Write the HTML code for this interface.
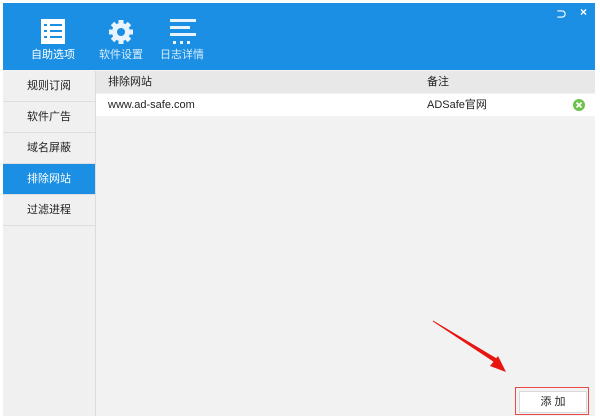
<!DOCTYPE html>
<html><head><meta charset="utf-8"><style>
body{margin:0;width:600px;height:419px;background:#fff;position:relative;overflow:hidden;font-family:"Liberation Sans","Noto Sans CJK SC",sans-serif;}
.win{position:absolute;left:3px;top:3px;width:592px;height:413px;background:#f2f2f2;}
.top{position:absolute;left:0;top:0;width:592px;height:67px;background:#1a8fe3;}
.tab{position:absolute;top:0;width:60px;height:67px;color:#fff;font-size:11px;text-align:center;}
.tab span{position:absolute;left:0;right:0;top:43px;}
.side{position:absolute;left:0;top:68px;width:92px;height:345px;background:#f0f0f0;border-right:1px solid #dcdcdc;}
.it{height:30px;line-height:30px;border-bottom:1px solid #dedede;font-size:11px;color:#222;text-align:center;}
.it.on{background:#1a8fe3;color:#fff;}
.hd{position:absolute;left:93px;top:68px;width:499px;height:22px;background:#e8e8e8;font-size:11px;line-height:22px;color:#222;}
.row{position:absolute;left:93px;top:91px;width:499px;height:22px;background:#fff;font-size:11px;line-height:22px;color:#222;}
</style></head><body>
<div class="win">
<div class="top">
 <div class="tab" style="left:20px">
  <svg width="60" height="44" viewBox="0 0 60 44"><rect x="18" y="16" width="24" height="25" fill="#fff"/><g stroke="#1a8fe3" stroke-width="2"><line x1="27" y1="22" x2="39" y2="22"/><line x1="27" y1="28" x2="39" y2="28"/><line x1="27" y1="34" x2="39" y2="34"/><line x1="21" y1="22" x2="24" y2="22"/><line x1="21" y1="28" x2="24" y2="28"/><line x1="21" y1="34" x2="24" y2="34"/></g></svg>
  <span>自助选项</span></div>
 <div class="tab" style="left:88px;color:#d8ecfb">
  <svg width="60" height="44" viewBox="0 0 60 44"><g fill="#e8f3fc"><circle cx="30" cy="29" r="9"/><g stroke="#e8f3fc" stroke-width="5"><line x1="30" y1="17" x2="30" y2="41"/><line x1="18" y1="29" x2="42" y2="29"/><line x1="21.5" y1="20.5" x2="38.5" y2="37.5"/><line x1="38.5" y1="20.5" x2="21.5" y2="37.5"/></g></g><circle cx="30" cy="29" r="4" fill="#1a8fe3"/></svg>
  <span>软件设置</span></div>
 <div class="tab" style="left:149px;color:#d8ecfb">
  <svg width="60" height="44" viewBox="0 0 60 44"><g fill="#e8f3fc"><rect x="18" y="16" width="26" height="3"/><rect x="18" y="23" width="20" height="3"/><rect x="18" y="30" width="26" height="3"/><rect x="21" y="38" width="3" height="3"/><rect x="28" y="38" width="3" height="3"/><rect x="35" y="38" width="3" height="3"/></g></svg>
  <span>日志详情</span></div>
 <div style="position:absolute;left:553px;top:3px;color:#fff;font-size:11px;font-weight:bold">⊃</div>
 <div style="position:absolute;left:577px;top:2px;color:#fff;font-size:12px;font-weight:bold">×</div>
</div>
<div class="side">
 <div class="it">规则订阅</div><div class="it">软件广告</div><div class="it">域名屏蔽</div><div class="it on">排除网站</div><div class="it">过滤进程</div>
</div>
<div class="hd"><span style="position:absolute;left:12px">排除网站</span><span style="position:absolute;left:331px">备注</span></div>
<div class="row"><span style="position:absolute;left:12px">www.ad-safe.com</span><span style="position:absolute;left:331px">ADSafe官网</span>
 <svg style="position:absolute;left:477px;top:5px" width="12" height="12"><circle cx="6" cy="6" r="6" fill="#6cc24a"/><path d="M3.5 3.5L8.5 8.5M8.5 3.5L3.5 8.5" stroke="#fff" stroke-width="1.8"/></svg></div>
<svg style="position:absolute;left:425px;top:315px" width="90" height="60"><path d="M5 3L70 46L72 43Z" fill="#e8140f" stroke="#e8140f" stroke-width="1"/><path d="M62 48L78 54L70 38Z" fill="#e8140f"/></svg>
<div style="position:absolute;left:512px;top:384px;width:74px;height:28px;border:1px solid #e84a4a;box-sizing:border-box;"><div style="position:absolute;left:3px;top:3px;width:66px;height:20px;background:#fff;border:1px solid #d8d8d8;font-size:11px;line-height:20px;text-align:center;color:#222">添 加</div></div>
</div>
</body></html>
